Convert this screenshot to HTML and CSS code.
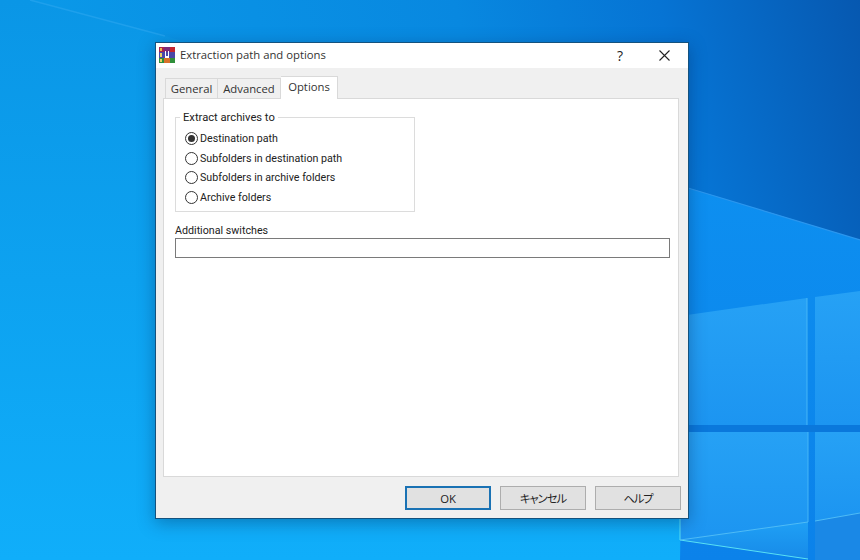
FILE: index.html
```html
<!DOCTYPE html>
<html lang="en">
<head>
<meta charset="utf-8">
<title>Extraction path and options</title>
<link rel="stylesheet" href="styles.css">
</head>
<body>
<div class="desktop">
  <svg class="wallpaper" width="860" height="560" viewBox="0 0 860 560" aria-hidden="true">
    <defs>
      <linearGradient id="left" x1="0" y1="0" x2="0" y2="1">
        <stop offset="0" stop-color="#0a96e6"/>
        <stop offset="1" stop-color="#10aefa"/>
      </linearGradient>
      <linearGradient id="upper" gradientUnits="userSpaceOnUse" x1="100" y1="200" x2="860" y2="0">
        <stop offset="0" stop-color="#0a98e8"/>
        <stop offset="0.5" stop-color="#0888e0"/>
        <stop offset="0.75" stop-color="#0674d4"/>
        <stop offset="1" stop-color="#0658b0"/>
      </linearGradient>
      <linearGradient id="lower" x1="0" y1="0" x2="0" y2="1">
        <stop offset="0" stop-color="#0d8ff0"/>
        <stop offset="1" stop-color="#0b82ea"/>
      </linearGradient>
      <linearGradient id="pane" x1="0" y1="0" x2="0" y2="1">
        <stop offset="0" stop-color="#26a1f5"/>
        <stop offset="1" stop-color="#1c95f1"/>
      </linearGradient>
      <linearGradient id="floor" x1="0" y1="0" x2="0" y2="1">
        <stop offset="0" stop-color="#1fa0f5"/>
        <stop offset="1" stop-color="#178ae8"/>
      </linearGradient>
    </defs>
    <rect width="860" height="560" fill="url(#left)"/>
    <polygon points="30,0 860,0 860,240 688,188 165,36" fill="url(#upper)"/>
    <polygon points="688,188 860,240 860,560 680,560" fill="url(#lower)"/>
    <path d="M30 0 L165 36" stroke="#1ea0ec" stroke-width="1.5" fill="none"/>
    <path d="M688 188 L860 240" stroke="#2b96ee" stroke-width="1.2" fill="none"/>
    <polygon points="680,316 807,298 807,425 680,425" fill="url(#pane)"/>
    <polygon points="815,297 860,291 860,425 815,425" fill="url(#pane)"/>
    <polygon points="680,432 808,432 808,522 680,540" fill="url(#pane)"/>
    <polygon points="815,432 860,432 860,513 815,521" fill="url(#pane)"/>
    <polygon points="680,540 808,522 808,559" fill="url(#floor)"/>
    <polygon points="815,521 860,513 860,560 815,560" fill="#1a88e6"/>
    <rect x="680" y="425" width="135" height="7" fill="#0a78dc"/>
    <rect x="815" y="425" width="45" height="7" fill="#0a78dc"/>
    <path d="M807 298V425M808 432V522" stroke="#47b6f6" stroke-width="1" fill="none"/>
    <path d="M680 518V540L808 559" stroke="#58e0f4" stroke-width="1" fill="none"/>
    <path d="M680 540L808 522M815 521L860 513" stroke="#4fbcf6" stroke-width="1" fill="none"/>
  </svg>

  <section class="window">
    <header class="titlebar">
      <svg class="app-icon" width="16" height="16" viewBox="0 0 16 16" aria-hidden="true">
        <rect x="0" y="0" width="16" height="5" fill="#a8234e"/>
        <rect x="5" y="0" width="6" height="5" fill="#7a2a78"/>
        <rect x="11" y="0" width="5" height="5" fill="#c4252f"/>
        <rect x="0" y="5" width="16" height="6" fill="#4a47a8"/>
        <rect x="0" y="11" width="16" height="5" fill="#2f8f3a"/>
        <rect x="5" y="11" width="6" height="5" fill="#d8702a"/>
        <rect x="1" y="1" width="2" height="3" fill="#e8b84a"/>
        <rect x="1" y="6" width="2" height="4" fill="#e8d26a"/>
        <rect x="1" y="12" width="2" height="3" fill="#e8d26a"/>
        <path d="M6 4h1v5h2V4h1v7H6z" fill="#ffffff"/>
      </svg>
      <span class="title">Extraction path and options</span>
      <span class="help-btn">?</span>
      <svg class="close-btn" width="11" height="11" viewBox="0 0 11 11" aria-hidden="true">
        <path d="M0.5 0.5L10.5 10.5M10.5 0.5L0.5 10.5" stroke="#222" stroke-width="1.1" fill="none"/>
      </svg>
    </header>

    <div class="client">
      <nav class="tabs">
        <span class="tab">General</span>
        <span class="tab">Advanced</span>
        <span class="tab tab-active">Options</span>
      </nav>
      <main class="panel">
        <fieldset class="group">
          <legend class="group-label">Extract archives to</legend>
          <label class="radio"><span class="dot dot-on"></span>Destination path</label>
          <label class="radio"><span class="dot"></span>Subfolders in destination path</label>
          <label class="radio"><span class="dot"></span>Subfolders in archive folders</label>
          <label class="radio"><span class="dot"></span>Archive folders</label>
        </fieldset>
        <div class="switches">
          <div class="switches-label">Additional switches</div>
          <div class="input"></div>
        </div>
      </main>
      <footer class="actions">
        <button class="btn btn-default">OK</button>
        <button class="btn btn-jp">キャンセル</button>
        <button class="btn btn-jp">ヘルプ</button>
      </footer>
    </div>
  </section>
</div>
</body>
</html>
```
FILE: styles.css
```css
html, body {
  margin: 0;
  padding: 0;
  overflow: hidden;
}

.desktop {
  position: relative;
  width: 860px;
  height: 560px;
  overflow: hidden;
  background: #0a96e6;
  font-family: "Open Sans", "Noto Sans CJK JP", sans-serif;
  font-size: 11.3px;
  color: #222;
}

.wallpaper {
  position: absolute;
  left: 0;
  top: 0;
  display: block;
}

.window {
  position: absolute;
  left: 155px;
  top: 42px;
  width: 534px;
  height: 477px;
  box-sizing: border-box;
  border: 1px solid #14527e;
  background: #f0f0f0;
  box-shadow: 0 4px 16px rgba(0, 30, 70, 0.35);
  display: flex;
  flex-direction: column;
}

.titlebar {
  height: 25px;
  flex: none;
  box-sizing: border-box;
  background: #fff;
  display: flex;
  align-items: center;
  padding: 0 18px 1px 3px;
}

.app-icon {
  flex: none;
  margin-right: 5px;
}

.title {
  flex: 1;
  padding-bottom: 2px;
  font-size: 11.3px;
  color: #333;
}

.help-btn {
  font-size: 14px;
  color: #222;
  margin-right: 36px;
}

.close-btn {
  flex: none;
}

.client {
  flex: 1;
  display: flex;
  flex-direction: column;
  padding: 8px 7px 8px 7px;
  min-height: 0;
}

.tabs {
  display: flex;
  align-items: flex-end;
  height: 22px;
  padding-left: 2px;
  flex: none;
  position: relative;
  z-index: 1;
}

.tab {
  box-sizing: border-box;
  height: 20px;
  padding-top: 2px;
  text-align: center;
  border: 1px solid #d9d9d9;
  border-bottom: none;
  border-right: none;
  background: #f0f0f0;
  color: #333;
}

.tab:nth-child(1) { width: 52px; }
.tab:nth-child(2) { width: 64px; border-right: 1px solid #d9d9d9; }

.tab-active {
  width: 57px;
  height: 23px;
  margin-bottom: -1px;
  background: #fff;
  border: 1px solid #d9d9d9;
  border-bottom: none;
  border-left: none;
  padding-top: 2px;
}

.panel {
  flex: none;
  box-sizing: border-box;
  width: 516px;
  height: 379px;
  background: #fff;
  border: 1px solid #d9d9d9;
  padding: 10px 8px 0 11px;
  font-family: "Roboto", "Open Sans", sans-serif;
  font-size: 10.7px;
}

.group {
  box-sizing: border-box;
  width: 240px;
  height: 103px;
  margin: 0;
  padding: 4px 0 0 9px;
  border: 1px solid #dcdcdc;
}

.group-label {
  padding: 2px 3px 0;
  margin-left: -5px;
  line-height: 14px;
  font-size: 11.2px;
}

.radio {
  display: flex;
  align-items: center;
  height: 19.5px;
  color: #222;
}

.dot {
  position: relative;
  flex: none;
  box-sizing: border-box;
  width: 13px;
  height: 13px;
  margin-right: 2px;
  border: 1px solid #333;
  border-radius: 50%;
  background: #fff;
}

.dot-on::after {
  content: "";
  position: absolute;
  left: 2px;
  top: 2px;
  width: 7px;
  height: 7px;
  border-radius: 50%;
  background: #333;
}

.switches {
  margin-top: 12px;
  width: 495px;
}

.switches-label {
  line-height: 14px;
  color: #222;
}

.input {
  box-sizing: border-box;
  height: 20px;
  border: 1px solid #7a7a7a;
  background: #fff;
}

.actions {
  display: flex;
  justify-content: flex-end;
  gap: 9px;
  margin-top: 9px;
}

.btn {
  box-sizing: border-box;
  width: 86px;
  height: 24px;
  padding: 0;
  border: 1px solid #adadad;
  background: #e1e1e1;
  font: inherit;
  color: #222;
}

.btn-jp {
  font-feature-settings: "palt";
  letter-spacing: -1px;
}

.btn-default {
  border: 2px solid #1a72b4;
}
```
